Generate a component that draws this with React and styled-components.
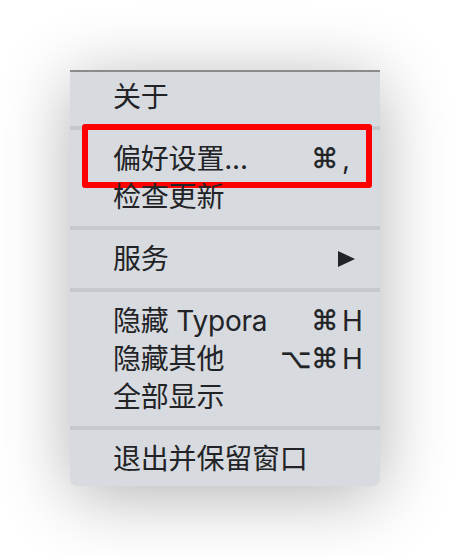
import styled, { createGlobalStyle } from "styled-components";

const GlobalStyle = createGlobalStyle`
  html, body {
    margin: 0;
    padding: 0;
    background: #ffffff;
  }
  body {
    font-family: Inter, "Noto Sans CJK SC", sans-serif;
  }
`;

const Page = styled.div`
  width: 450px;
  height: 556px;
  padding: 70px 0 0 70px;
  box-sizing: border-box;
`;

const Menu = styled.div`
  position: relative;
  width: 310px;
  box-sizing: border-box;
  background: #d7dade;
  border-top: 2px solid #8b8b8f;
  border-radius: 0 0 7px 7px;
  padding: 6px 0 8px;
  box-shadow: 0 10px 70px rgba(0, 0, 0, 0.3);
  color: #222326;
`;

const Item = styled.div`
  position: relative;
  display: flex;
  align-items: center;
  height: 38px;
  padding: 0 14px 0 43px;
  font-size: 28px;
  line-height: 38px;
  white-space: nowrap;
  letter-spacing: -0.2px;

  ${({ $marked }) =>
    $marked &&
    `
    &::after {
      content: "";
      position: absolute;
      top: -16px;
      bottom: -10px;
      left: 12px;
      right: 8px;
      border: 6px solid #ff0000;
      border-radius: 3px;
    }
  `}
`;

const Label = styled.span`
  flex: 1;
`;

const Shortcut = styled.span`
  display: flex;
  align-items: center;
`;

const Mods = styled.span`
  text-align: right;
  font-family: "DejaVu Sans", sans-serif;
  font-size: 27px;
  font-weight: 500;
  -webkit-text-stroke: 0.4px #222326;
`;

const Key = styled.span`
  width: 24px;
  margin-left: 4px;
  font-family: Inter, sans-serif;
  font-size: 28px;
`;

const Arrow = styled.svg`
  width: 17px;
  height: 16px;
  margin-right: 11px;
  fill: #222326;
`;

const Separator = styled.div`
  height: 4px;
  margin: 10px 0;
  background: #c5c8cc;
`;

const groups = [
  [{ label: "关于" }],
  [
    { label: "偏好设置...", mods: "⌘", shortcut: ",", marked: true },
    { label: "检查更新" },
  ],
  [{ label: "服务", submenu: true }],
  [
    { label: "隐藏 Typora", mods: "⌘", shortcut: "H" },
    { label: "隐藏其他", mods: "⌥⌘", shortcut: "H" },
    { label: "全部显示" },
  ],
  [{ label: "退出并保留窗口" }],
];

const MenuItem = ({ label, mods, shortcut, submenu, marked }) => (
  <Item $marked={marked}>
    <Label>{label}</Label>
    {mods && (
      <Shortcut>
        <Mods>{mods}</Mods>
        <Key>{shortcut}</Key>
      </Shortcut>
    )}
    {submenu && (
      <Arrow viewBox="0 0 17 16">
        <path d="M0 0 L17 8 L0 16 Z" />
      </Arrow>
    )}
  </Item>
);

const App = () => (
  <>
    <GlobalStyle />
    <Page>
      <Menu>
        {groups.map((group, i) => (
          <div key={i}>
            {i > 0 && <Separator />}
            {group.map((item) => (
              <MenuItem key={item.label} {...item} />
            ))}
          </div>
        ))}
      </Menu>
    </Page>
  </>
);

export default App;
